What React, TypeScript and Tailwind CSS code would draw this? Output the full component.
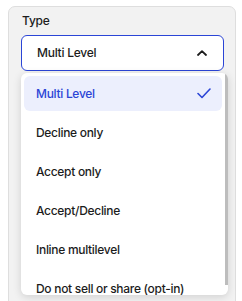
const options = [
  "Multi Level",
  "Decline only",
  "Accept only",
  "Accept/Decline",
  "Inline multilevel",
  "Do not sell or share (opt-in)",
];

export default function App() {
  const selected = "Multi Level";

  return (
    <div className="h-[301px] w-[242px] overflow-hidden bg-white pl-[8px] pt-[6px] font-['Inter',sans-serif]">
      <div className="h-[320px] w-[228px] rounded-[7px] border border-[#dedede] bg-[#f2f2f2] px-[12px] pt-[6px]">
        <label className="block pl-[1px] text-[12px] font-medium leading-[16px] tracking-[-0.2px] text-[#1c1c1c]">
          Type
        </label>
        <div className="relative mt-[6px]">
          <button className="flex h-[36px] w-[203px] items-center justify-between rounded-[6px] border-[1.5px] border-[#2b45d6] bg-white pl-[15px] pr-[16px] text-[12px] font-medium tracking-[-0.25px] text-[#1c1c1c]">
            <span>Multi Level</span>
            <svg width="10" height="6" viewBox="0 0 10 6" fill="none">
              <path
                d="M1 5L5 1.2L9 5"
                stroke="#1c1c1c"
                strokeWidth="1.8"
                strokeLinecap="round"
                strokeLinejoin="round"
              />
            </svg>
          </button>

          <div className="absolute left-0 top-[38px] z-10 flex h-[222px] w-[207px] overflow-hidden rounded-[6px] bg-white shadow-[0_2px_8px_rgba(0,0,0,0.14)]">
            <ul className="flex flex-1 flex-col gap-[4px] px-[3px] pt-[3px]">
              {options.map((opt) => {
                const active = opt === selected;
                return (
                  <li
                    key={opt}
                    className={`flex h-[35px] shrink-0 items-center justify-between rounded-[6px] pl-[12px] pr-[11px] text-[12px] font-medium tracking-[-0.3px] ${
                      active ? "bg-[#eceffd] text-[#2b45d6]" : "text-[#1c1c1c]"
                    }`}
                  >
                    <span>{opt}</span>
                    {active && (
                      <svg width="14" height="11" viewBox="0 0 14 11" fill="none">
                        <path
                          d="M1 5.5L5 9.5L13 1"
                          stroke="#2b45d6"
                          strokeWidth="1.6"
                          strokeLinecap="round"
                          strokeLinejoin="round"
                        />
                      </svg>
                    )}
                  </li>
                );
              })}
            </ul>
            <div className="w-[3px] pb-[10px]">
              <div className="h-full w-[3px] bg-[#bdbdbd]" />
            </div>
          </div>
        </div>
      </div>
    </div>
  );
}
